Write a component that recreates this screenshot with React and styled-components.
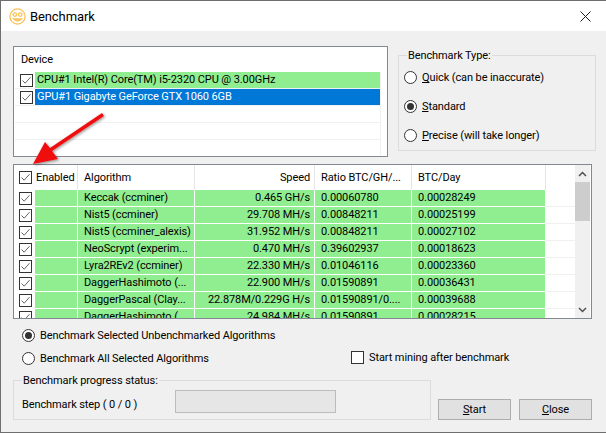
import React from "react";
import styled, { createGlobalStyle } from "styled-components";

const GlobalStyle = createGlobalStyle`
  html, body {
    margin: 0;
    padding: 0;
    background: #f0f0f0;
  }
  body {
    font-family: Roboto, "Noto Sans", sans-serif;
    font-size: 11px;
    letter-spacing: -0.1px;
    color: #000;
  }
`;

const Window = styled.div`
  position: relative;
  box-sizing: border-box;
  width: 606px;
  height: 433px;
  overflow: hidden;
  background: #f0f0f0;
  border: 1px solid #6e6e6e;
  border-right: none;
`;

const TitleBar = styled.div`
  display: flex;
  align-items: center;
  height: 30px;
  padding: 0 15px 0 8px;
  gap: 4px;
  background: #fff;
  font-size: 13px;
`;

const TitleText = styled.span`
  flex: 1;
`;

const Body = styled.div`
  padding: 15px 0 0 12px;
  display: flex;
  flex-direction: column;
`;

const TopRow = styled.div`
  display: flex;
  gap: 10px;
  align-items: flex-start;
`;

const DeviceList = styled.div`
  box-sizing: border-box;
  width: 375px;
  height: 111px;
  padding-left: 1px;
  background: #fff;
  border: 1px solid #828790;
  overflow: hidden;
`;

const DeviceHeader = styled.div`
  height: 25px;
  padding: 5px 0 0 6px;
  box-sizing: border-box;
  line-height: 16px;
`;

const DeviceRow = styled.div`
  display: flex;
  align-items: center;
  height: 17px;
  width: 366px;
  box-sizing: border-box;
  border-bottom: 1px solid #f0f0f0;
  border-right: 1px solid #f0f0f0;
`;

const CheckCell = styled.div`
  flex: none;
  width: 20px;
  padding-left: 5px;
  box-sizing: border-box;
  display: flex;
`;

const DeviceName = styled.div`
  flex: 1;
  height: 16px;
  line-height: 16px;
  padding-left: 2px;
  background: ${(p) => (p.$selected ? "#0078d7" : "#90ee90")};
  color: ${(p) => (p.$selected ? "#fff" : "#000")};
`;

const Group = styled.fieldset`
  box-sizing: border-box;
  margin: 0;
  min-width: 0;
  border: 1px solid #dcdcdc;
  border-radius: 0;
`;

const TypeGroup = styled(Group)`
  width: 198px;
  height: 103px;
  margin-top: 2px;
  padding: 8px 0 0 5px;
  display: flex;
  flex-direction: column;
  gap: 16px;
`;

const Legend = styled.legend`
  margin-left: ${(p) => p.$indent}px;
  padding: 0 1px;
  line-height: 15px;
`;

const Option = styled.label`
  display: flex;
  align-items: center;
  gap: 5px;
  height: 13px;
  line-height: 13px;
  white-space: nowrap;
`;

const Radio = styled.span`
  flex: none;
  box-sizing: border-box;
  width: 13px;
  height: 13px;
  border-radius: 50%;
  background: #fff;
  border: 1px solid #333;
  display: flex;
  align-items: center;
  justify-content: center;
  &::after {
    content: "";
    display: ${(p) => (p.$on ? "block" : "none")};
    width: 7px;
    height: 7px;
    border-radius: 50%;
    background: #333;
  }
`;

const Box = styled.span`
  flex: none;
  box-sizing: border-box;
  width: 13px;
  height: 13px;
  background: #fff;
  border: 1px solid #333;
  display: flex;
`;

const AlgoList = styled.div`
  box-sizing: border-box;
  width: 579px;
  height: 155px;
  margin-top: 7px;
  background: #fff;
  border: 1px solid #828790;
  display: flex;
  overflow: hidden;
`;

const AlgoTable = styled.div`
  width: 561px;
  display: flex;
  flex-direction: column;
`;

const COLUMNS = "21px 43px 117px 120px 97px 134px 29px";

const HeaderRow = styled.div`
  display: grid;
  grid-template-columns: ${COLUMNS};
  height: 25px;
  flex: none;
`;

const HeaderCell = styled.div`
  display: flex;
  align-items: center;
  justify-content: ${(p) => (p.$right ? "flex-end" : "flex-start")};
  padding: ${(p) => (p.$right ? "0 4px 0 0" : "0 0 0 6px")};
  white-space: nowrap;
  overflow: hidden;
  box-sizing: border-box;
  border-right: 1px solid #e5e5e5;
`;

const EnabledCell = styled(HeaderCell)`
  padding-left: 1px;
`;

const HeaderCheck = styled.div`
  display: flex;
  align-items: center;
  padding-left: 5px;
`;

const AlgoRow = styled.div`
  display: grid;
  grid-template-columns: ${COLUMNS};
  height: 17px;
  flex: none;
`;

const Cell = styled.div`
  height: 16px;
  line-height: 16px;
  background: #90ee90;
  padding: ${(p) => (p.$right ? "0 4px 0 0" : "0 0 0 6px")};
  text-align: ${(p) => (p.$right ? "right" : "left")};
  white-space: nowrap;
  overflow: hidden;
  box-sizing: border-box;
  border-right: 1px solid #fff;
`;

const AlgoCheck = styled.div`
  display: flex;
  align-items: center;
  height: 16px;
  padding-left: 5px;
`;

const Filler = styled.div`
  border-bottom: 1px solid #f0f0f0;
`;

const Scrollbar = styled.div`
  flex: none;
  width: 15px;
  background: #f0f0f0;
  display: flex;
  flex-direction: column;
  align-items: center;
`;

const ScrollButton = styled.div`
  flex: none;
  height: 17px;
  display: flex;
  align-items: center;
  justify-content: center;
`;

const ScrollTrack = styled.div`
  flex: 1;
  width: 100%;
`;

const ScrollThumb = styled.div`
  height: 39px;
  background: #cdcdcd;
`;

const Options = styled.div`
  display: grid;
  grid-template-columns: 329px auto;
  margin-top: 10px;
  padding-left: 9px;
`;

const RadioStack = styled.div`
  display: flex;
  flex-direction: column;
  gap: 10px;
`;

const MiningOption = styled(Option)`
  align-self: end;
  margin-bottom: 1px;
`;

const BottomRow = styled.div`
  display: flex;
  align-items: flex-end;
  margin-top: 8px;
`;

const ProgressGroup = styled(Group)`
  width: 418px;
  height: 47px;
  padding: 2px 0 0 8px;
`;

const ProgressInner = styled.div`
  display: flex;
  align-items: flex-start;
`;

const StepLabel = styled.span`
  width: 153px;
  margin-top: 7px;
  line-height: 16px;
  white-space: nowrap;
`;

const ProgressBar = styled.div`
  width: 161px;
  height: 23px;
  box-sizing: border-box;
  background: #e6e6e6;
  border: 1px solid #bcbcbc;
`;

const Buttons = styled.div`
  display: flex;
  gap: 8px;
  margin-left: 7px;
`;

const Button = styled.button`
  width: 73px;
  height: 21px;
  padding: 0;
  background: #e1e1e1;
  border: 1px solid #adadad;
  font: inherit;
  letter-spacing: inherit;
  color: #000;
`;

const ArrowLayer = styled.svg`
  position: absolute;
  left: 0;
  top: 0;
  pointer-events: none;
`;

function Check() {
  return (
    <svg width="11" height="11" viewBox="0 0 11 11">
      <path d="M1.5 5.5 L4.2 8.2 L9.5 2.2" fill="none" stroke="#666" strokeWidth="1" />
    </svg>
  );
}

function CheckBox({ checked = true }) {
  return <Box>{checked && <Check />}</Box>;
}

function AppIcon() {
  return (
    <svg width="17" height="17" viewBox="0 0 17 17" fill="none" stroke="#fbc25a" strokeWidth="1.3">
      <circle cx="8.5" cy="8.5" r="7.6" />
      <circle cx="5.8" cy="6.6" r="1.8" />
      <circle cx="11.2" cy="6.6" r="1.8" />
      <path d="M4.6 11 Q8.5 14.4 12.4 11 Z" />
    </svg>
  );
}

function CloseIcon() {
  return (
    <svg width="11" height="11" viewBox="0 0 11 11">
      <path d="M0.5 0.5 L10.5 10.5 M10.5 0.5 L0.5 10.5" stroke="#222" strokeWidth="1" />
    </svg>
  );
}

const algos = [
  ["Keccak (ccminer)", "0.465 GH/s", "0.00060780", "0.00028249"],
  ["Nist5 (ccminer)", "29.708 MH/s", "0.00848211", "0.00025199"],
  ["Nist5 (ccminer_alexis)", "31.952 MH/s", "0.00848211", "0.00027102"],
  ["NeoScrypt (experim...", "0.470 MH/s", "0.39602937", "0.00018623"],
  ["Lyra2REv2 (ccminer)", "22.330 MH/s", "0.01046116", "0.00023360"],
  ["DaggerHashimoto (...", "22.900 MH/s", "0.01590891", "0.00036431"],
  ["DaggerPascal (Clay...", "22.878M/0.229G H/s", "0.01590891/0....", "0.00039688"],
  ["DaggerHashimoto (...", "24.984 MH/s", "0.01590891", "0.00028215"],
];

export default function App() {
  return (
    <Window>
      <GlobalStyle />
      <TitleBar>
        <AppIcon />
        <TitleText>Benchmark</TitleText>
        <CloseIcon />
      </TitleBar>
      <Body>
        <TopRow>
          <DeviceList>
            <DeviceHeader>Device</DeviceHeader>
            <DeviceRow>
              <CheckCell><CheckBox /></CheckCell>
              <DeviceName>CPU#1 Intel(R) Core(TM) i5-2320 CPU @ 3.00GHz</DeviceName>
            </DeviceRow>
            <DeviceRow>
              <CheckCell><CheckBox /></CheckCell>
              <DeviceName $selected>GPU#1 Gigabyte GeForce GTX 1060 6GB</DeviceName>
            </DeviceRow>
            <DeviceRow />
            <DeviceRow />
            <DeviceRow />
          </DeviceList>
          <TypeGroup as="fieldset">
            <Legend $indent={3}>Benchmark Type:</Legend>
            <Option><Radio /><span><u>Q</u>uick (can be inaccurate)</span></Option>
            <Option><Radio $on /><span><u>S</u>tandard</span></Option>
            <Option><Radio /><span><u>P</u>recise (will take longer)</span></Option>
          </TypeGroup>
        </TopRow>

        <AlgoList>
          <AlgoTable>
            <HeaderRow>
              <HeaderCheck><CheckBox /></HeaderCheck>
              <EnabledCell>Enabled</EnabledCell>
              <HeaderCell>Algorithm</HeaderCell>
              <HeaderCell $right>Speed</HeaderCell>
              <HeaderCell>Ratio BTC/GH/...</HeaderCell>
              <HeaderCell>BTC/Day</HeaderCell>
            </HeaderRow>
            {algos.map((a, i) => (
              <AlgoRow key={i}>
                <AlgoCheck><CheckBox /></AlgoCheck>
                <Cell />
                <Cell>{a[0]}</Cell>
                <Cell $right>{a[1]}</Cell>
                <Cell>{a[2]}</Cell>
                <Cell>{a[3]}</Cell>
                <Filler />
              </AlgoRow>
            ))}
          </AlgoTable>
          <Scrollbar>
            <ScrollButton>
              <svg width="9" height="6" viewBox="0 0 9 6"><path d="M1 5 L4.5 1.5 L8 5" fill="none" stroke="#505050" strokeWidth="1.5" /></svg>
            </ScrollButton>
            <ScrollTrack><ScrollThumb /></ScrollTrack>
            <ScrollButton>
              <svg width="9" height="6" viewBox="0 0 9 6"><path d="M1 1 L4.5 4.5 L8 1" fill="none" stroke="#505050" strokeWidth="1.5" /></svg>
            </ScrollButton>
          </Scrollbar>
        </AlgoList>

        <Options>
          <RadioStack>
            <Option><Radio $on /><span>Benchmark Selected Unbenchmarked Algorithms</span></Option>
            <Option><Radio /><span>Benchmark All Selected Algorithms</span></Option>
          </RadioStack>
          <MiningOption><CheckBox checked={false} /><span>Start mining after benchmark</span></MiningOption>
        </Options>

        <BottomRow>
          <ProgressGroup as="fieldset">
            <Legend $indent={0}>Benchmark progress status:</Legend>
            <ProgressInner>
              <StepLabel>Benchmark step ( 0 / 0 )</StepLabel>
              <ProgressBar />
            </ProgressInner>
          </ProgressGroup>
          <Buttons>
            <Button><u>S</u>tart</Button>
            <Button><u>C</u>lose</Button>
          </Buttons>
        </BottomRow>
      </Body>
      <ArrowLayer width="606" height="433" viewBox="0 0 606 433">
        <defs>
          <filter id="arrowShadow" x="-30%" y="-30%" width="160%" height="160%">
            <feDropShadow dx="1" dy="1" stdDeviation="1.5" floodColor="#000" floodOpacity="0.45" />
          </filter>
        </defs>
        <path d="M101 112 L103 115 L51 150 L57 158 L32 163 L44 141 L49 147 Z" fill="#f01010" filter="url(#arrowShadow)" />
      </ArrowLayer>
    </Window>
  );
}
